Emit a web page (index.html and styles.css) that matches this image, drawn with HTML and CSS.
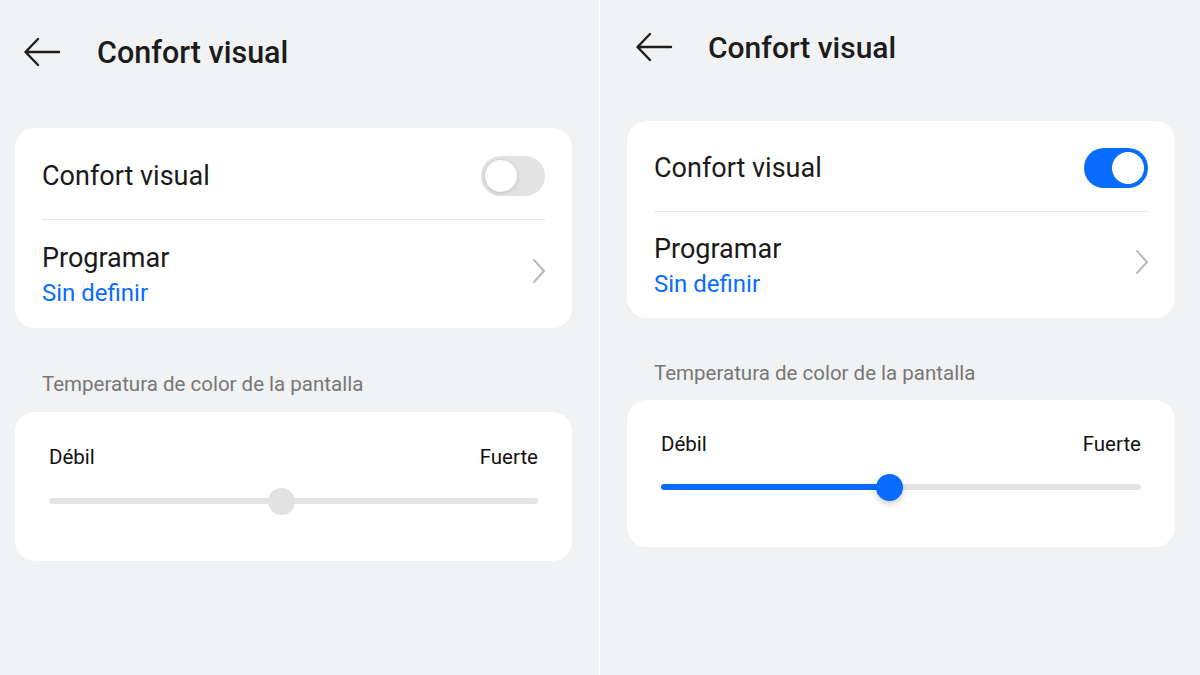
FILE: index.html
```html
<!DOCTYPE html>
<html>
<head>
  <title>Confort visual</title>
  <link rel="stylesheet" href="styles.css">
</head>
<body>
  <div class="screens">
    <!-- off state -->
    <div class="screen">
      <div class="header">
        <svg class="back" width="38" height="30" viewBox="0 0 38 30">
          <path d="M36 15H3M15 2L2.5 15L15 28" fill="none" stroke="#1c1c1c" stroke-width="2.4" stroke-linecap="round" stroke-linejoin="round"/>
        </svg>
        <span class="title">Confort visual</span>
      </div>
      <div class="card">
        <div class="row row-switch">
          <span class="row-title">Confort visual</span>
          <span class="switch"><span class="knob"></span></span>
        </div>
        <div class="sep"></div>
        <div class="row row-link">
          <div>
            <div class="row-title">Programar</div>
            <div class="row-sub">Sin definir</div>
          </div>
          <svg class="chevron" width="14" height="26" viewBox="0 0 14 26">
            <path d="M2 2L12 13L2 24" fill="none" stroke="#b9b9b9" stroke-width="2" stroke-linecap="round" stroke-linejoin="round"/>
          </svg>
        </div>
      </div>
      <div class="section-label">Temperatura de color de la pantalla</div>
      <div class="card slider-card">
        <div class="slider-labels">
          <span>Débil</span>
          <span>Fuerte</span>
        </div>
        <div class="slider">
          <div class="thumb" style="left: 47.6%"></div>
        </div>
      </div>
    </div>

    <div class="divider"></div>

    <!-- on state -->
    <div class="screen screen-on">
      <div class="header">
        <svg class="back" width="38" height="30" viewBox="0 0 38 30">
          <path d="M36 15H3M15 2L2.5 15L15 28" fill="none" stroke="#1c1c1c" stroke-width="2.4" stroke-linecap="round" stroke-linejoin="round"/>
        </svg>
        <span class="title">Confort visual</span>
      </div>
      <div class="card">
        <div class="row row-switch">
          <span class="row-title">Confort visual</span>
          <span class="switch on"><span class="knob"></span></span>
        </div>
        <div class="sep"></div>
        <div class="row row-link">
          <div>
            <div class="row-title">Programar</div>
            <div class="row-sub">Sin definir</div>
          </div>
          <svg class="chevron" width="14" height="26" viewBox="0 0 14 26">
            <path d="M2 2L12 13L2 24" fill="none" stroke="#b9b9b9" stroke-width="2" stroke-linecap="round" stroke-linejoin="round"/>
          </svg>
        </div>
      </div>
      <div class="section-label">Temperatura de color de la pantalla</div>
      <div class="card slider-card">
        <div class="slider-labels">
          <span>Débil</span>
          <span>Fuerte</span>
        </div>
        <div class="slider active">
          <div class="fill" style="width: 47.6%"></div>
          <div class="thumb" style="left: 47.6%"></div>
        </div>
      </div>
    </div>
  </div>
</body>
</html>
```

FILE: styles.css
```css
* {
  box-sizing: border-box;
}

body {
  margin: 0;
  font-family: Roboto, "Noto Sans", Arial, sans-serif;
  background-color: #f1f2f4;
  color: #1a1a1a;
}

.screens {
  display: flex;
  width: 1200px;
  height: 675px;
}

.screen {
  width: 599px;
  padding: 0 27px 0 15px;
}

.screen-on {
  width: 600px;
  padding: 0 25px 0 27px;
}

.divider {
  width: 1px;
  background-color: #ffffff;
}

.header {
  display: flex;
  align-items: center;
  height: 104px;
  margin-bottom: 24px;
}

.screen-on .header {
  height: 94px;
  margin-bottom: 27px;
}

.back {
  margin-left: 8px;
  margin-right: 36px;
}

.screen-on .back {
  margin-left: 8px;
  margin-right: 35px;
}

.title {
  font-size: 30.5px;
  font-weight: 500;
  color: #1c1c1c;
}

.screen-on .title {
  font-size: 30px;
}

.card {
  background-color: #fff;
  border-radius: 20px;
  padding: 0 27px;
}

.row {
  display: flex;
  align-items: center;
  justify-content: space-between;
}

.row-switch {
  height: 91px;
  padding-top: 4px;
}

.screen-on .row-switch {
  height: 90px;
  padding-top: 3px;
}

.row-title {
  font-size: 27px;
  color: #1a1a1a;
}

.row-sub {
  font-size: 24px;
  color: #0a6cff;
  margin-top: 5px;
}

.row-link {
  height: 108px;
}

.screen-on .row-link {
  height: 106px;
}

.sep {
  height: 1px;
  background-color: #e6e6e6;
}

.switch {
  position: relative;
  width: 64px;
  height: 40px;
  border-radius: 20px;
  background-color: #e3e3e3;
}

.switch .knob {
  position: absolute;
  top: 4px;
  left: 4px;
  width: 32px;
  height: 32px;
  border-radius: 50%;
  background-color: #fff;
  box-shadow: 0 1px 4px rgba(0, 0, 0, 0.18);
}

.switch.on {
  background-color: #0a6cff;
}

.switch.on .knob {
  left: 28px;
  box-shadow: none;
}

.chevron {
  margin-right: -1px;
  margin-bottom: 6px;
}

.section-label {
  font-size: 20.5px;
  color: #777;
  padding: 44px 0 0 27px;
  height: 84px;
}

.screen-on .section-label {
  padding-top: 43px;
  height: 82px;
}

.slider-card {
  height: 149px;
  padding: 33px 34px 0;
}

.screen-on .slider-card {
  height: 147px;
  padding: 32px 34px 0;
}

.slider-labels {
  display: flex;
  justify-content: space-between;
  font-size: 20.5px;
  color: #111;
}

.slider {
  position: relative;
  height: 6px;
  margin-top: 29px;
  border-radius: 3px;
  background-color: #e4e4e4;
}

.screen-on .slider {
  margin-top: 28px;
}

.slider .fill {
  position: absolute;
  left: 0;
  top: 0;
  bottom: 0;
  border-radius: 3px;
  background-color: #0a6cff;
}

.slider .thumb {
  position: absolute;
  top: 50%;
  width: 27px;
  height: 27px;
  margin: -13.5px 0 0 -13.5px;
  border-radius: 50%;
  background-color: #e2e2e2;
}

.slider.active .thumb {
  background-color: #0a6cff;
  box-shadow: 0 3px 6px rgba(0, 0, 0, 0.2);
}
```
